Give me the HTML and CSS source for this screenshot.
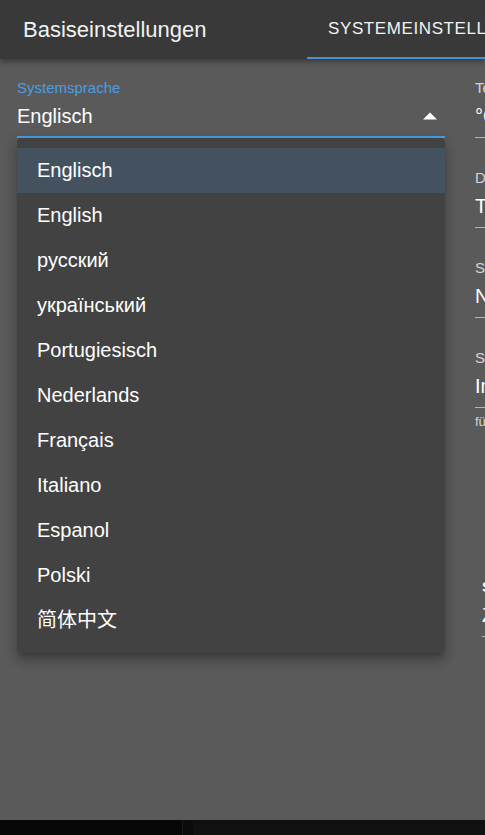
FILE: index.html
```html
<!doctype html>
<html lang="de">
    <head>
        <meta charset="UTF-8" />
        <meta name="viewport" content="width=device-width, initial-scale=1.0" />
        <title>Basiseinstellungen</title>
        <link rel="stylesheet" href="styles.css">
    </head>
    <body>
        <div class="app">
            <header class="topbar">
                <div class="title">Basiseinstellungen</div>
                <nav class="tabs">
                    <div class="tab active">Systemeinstellungen</div>
                    <div class="tab">Netzwerk</div>
                </nav>
            </header>

            <main class="content">
                <div class="col">
                    <div class="field focused">
                        <label class="field-label">Systemsprache</label>
                        <div class="field-input">
                            <span>Englisch</span>
                            <svg class="arrow" width="14" height="8" viewBox="0 0 14 8">
                                <path d="M0 7.5 L7 0.5 L14 7.5 Z" fill="#ffffff" />
                            </svg>
                        </div>

                        <ul class="menu">
                            <li class="menu-item selected">Englisch</li>
                            <li class="menu-item">English</li>
                            <li class="menu-item">русский</li>
                            <li class="menu-item">український</li>
                            <li class="menu-item">Portugiesisch</li>
                            <li class="menu-item">Nederlands</li>
                            <li class="menu-item">Français</li>
                            <li class="menu-item">Italiano</li>
                            <li class="menu-item">Espanol</li>
                            <li class="menu-item">Polski</li>
                            <li class="menu-item">简体中文</li>
                        </ul>
                    </div>
                </div>

                <div class="col col-right">
                    <div class="field">
                        <label class="field-label">Temperatureinheit</label>
                        <div class="field-input">°C</div>
                    </div>
                    <div class="field">
                        <label class="field-label">Datumsformat</label>
                        <div class="field-input">TT.MM.JJJJ</div>
                    </div>
                    <div class="field">
                        <label class="field-label">Sommerzeit</label>
                        <div class="field-input">Nicht aktiv</div>
                    </div>
                    <div class="field">
                        <label class="field-label">Standby-Zeit</label>
                        <div class="field-input">Immer an</div>
                        <div class="helper">für das Display</div>
                    </div>
                    <div class="field group">
                        <label class="field-label strong">Systemzeit</label>
                        <div class="field-input">Zeitzone</div>
                    </div>
                </div>
            </main>
        </div>

        <footer class="taskbar">
            <div class="task-start"></div>
            <div class="task-sep"></div>
            <div class="task-rest"></div>
        </footer>
    </body>
</html>
```

FILE: styles.css
```css
* {
    box-sizing: border-box;
}
body {
    margin: 0;
    width: 485px;
    height: 835px;
    overflow: hidden;
    background-color: #0b0b0b;
    color: #ffffff;
    font-family: "Liberation Sans", Arial, "Noto Sans CJK SC", sans-serif;
}
.app {
    height: 820px;
    background-color: #5a5a5a;
    display: flex;
    flex-direction: column;
    overflow: hidden;
}
.topbar {
    flex: 0 0 59px;
    display: flex;
    background-color: #393939;
    position: relative;
    z-index: 2;
    box-shadow: 0 2px 4px -1px rgba(0, 0, 0, 0.2), 0 4px 5px 0 rgba(0, 0, 0, 0.14),
        0 1px 10px 0 rgba(0, 0, 0, 0.12);
}
.title {
    flex: 0 0 307px;
    padding-left: 23px;
    font-size: 22px;
    line-height: 26px;
    color: #f2f2f2;
    display: flex;
    align-items: center;
}
.tabs {
    display: flex;
}
.tab {
    padding: 0 21px;
    font-size: 17px;
    line-height: 20px;
    letter-spacing: 0.6px;
    text-transform: uppercase;
    white-space: nowrap;
    color: #f2f2f2;
    display: flex;
    align-items: center;
    border-bottom: 2px solid transparent;
}
.tab.active {
    border-bottom-color: #4a8fd0;
}
.content {
    display: grid;
    grid-template-columns: 428px 400px;
    column-gap: 30px;
    padding: 20px 0 0 17px;
}
.field {
    position: relative;
}
.col-right .field + .field {
    margin-top: 31px;
}
.field-label {
    display: block;
    font-size: 15px;
    line-height: 18px;
    color: rgba(255, 255, 255, 0.75);
    white-space: nowrap;
}
.field-label.strong {
    color: #ffffff;
    font-weight: bold;
}
.field.focused .field-label {
    color: #4a9de3;
}
.field-input {
    margin-top: 7px;
    display: flex;
    align-items: center;
    justify-content: space-between;
    font-size: 20px;
    line-height: 24px;
    padding-bottom: 9px;
    border-bottom: 1px solid rgba(255, 255, 255, 0.55);
    white-space: nowrap;
}
.field.focused .field-input {
    padding-bottom: 8px;
    border-bottom: 2px solid #4a9de3;
}
.arrow {
    margin-right: 8px;
}
.helper {
    margin-top: 6px;
    font-size: 13px;
    line-height: 16px;
    color: rgba(255, 255, 255, 0.75);
    white-space: nowrap;
}
.col-right .field.group {
    margin-top: 148px;
    padding-left: 7px;
}
.menu {
    position: absolute;
    top: 100%;
    left: 0;
    right: 0;
    margin: 0;
    padding: 10px 0;
    list-style: none;
    background-color: #424242;
    border-radius: 4px;
    z-index: 3;
    box-shadow: 0 5px 5px -3px rgba(0, 0, 0, 0.2), 0 8px 10px 1px rgba(0, 0, 0, 0.14),
        0 3px 14px 2px rgba(0, 0, 0, 0.12);
}
.menu-item {
    height: 45px;
    padding: 0 20px;
    font-size: 20px;
    line-height: 45px;
    white-space: nowrap;
}
.menu-item.selected {
    background-color: #44525f;
}
.taskbar {
    height: 15px;
    display: flex;
}
.task-start {
    width: 182px;
    background-color: #070707;
}
.task-sep {
    width: 11px;
    background-color: #0b0b0b;
    border-left: 1px solid #1a1a1a;
}
.task-rest {
    flex: 1;
    background-color: #101010;
}
```
